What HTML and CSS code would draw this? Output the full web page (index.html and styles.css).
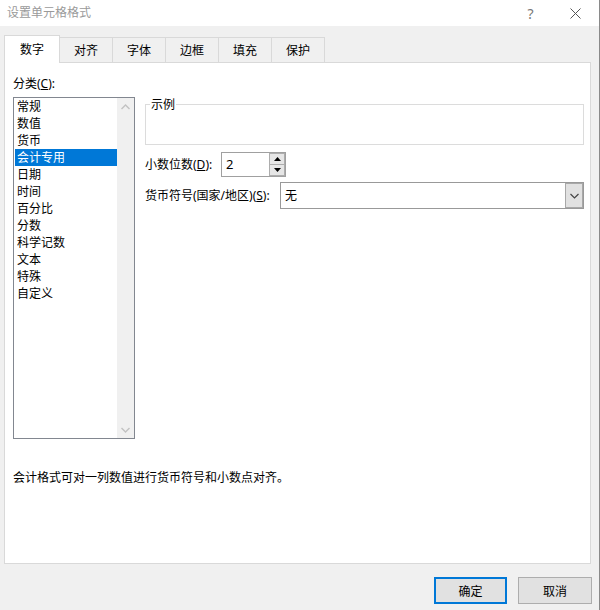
FILE: index.html
```html
<!DOCTYPE html>
<html lang="zh-CN">
<head>
<meta charset="utf-8">
<title>设置单元格格式</title>
<link rel="stylesheet" href="styles.css">
</head>
<body>
<div class="window">
  <div class="titlebar">
    <div class="title">设置单元格格式</div>
    <div class="tb-btn help">?</div>
    <div class="tb-btn close">
      <svg width="11" height="11" viewBox="0 0 11 11"><path d="M0.5 0.5 L10.5 10.5 M10.5 0.5 L0.5 10.5" stroke="#555" stroke-width="1" fill="none"/></svg>
    </div>
  </div>

  <div class="tabs">
    <div class="tab active">数字</div>
    <div class="tab">对齐</div>
    <div class="tab">字体</div>
    <div class="tab">边框</div>
    <div class="tab">填充</div>
    <div class="tab">保护</div>
  </div>

  <div class="panel">
    <div class="cols">
      <div class="left">
        <div class="lbl">分类(<u>C</u>):</div>
        <div class="listbox">
          <div class="items">
            <div class="item">常规</div>
            <div class="item">数值</div>
            <div class="item">货币</div>
            <div class="item sel">会计专用</div>
            <div class="item">日期</div>
            <div class="item">时间</div>
            <div class="item">百分比</div>
            <div class="item">分数</div>
            <div class="item">科学记数</div>
            <div class="item">文本</div>
            <div class="item">特殊</div>
            <div class="item">自定义</div>
          </div>
          <div class="scroll">
            <div class="sarrow"><svg width="9" height="6" viewBox="0 0 9 6"><path d="M0.5 5 L4.5 1 L8.5 5" stroke="#c2c2c2" stroke-width="1.4" fill="none"/></svg></div>
            <div class="sarrow"><svg width="9" height="6" viewBox="0 0 9 6"><path d="M0.5 1 L4.5 5 L8.5 1" stroke="#c2c2c2" stroke-width="1.4" fill="none"/></svg></div>
          </div>
        </div>
      </div>
      <div class="right">
        <fieldset class="sample">
          <legend>示例</legend>
          <div class="sample-body"></div>
        </fieldset>
        <div class="row row1">
          <div class="flabel w1">小数位数(<u>D</u>):</div>
          <div class="spin">
            <div class="spin-val">2</div>
            <div class="spin-btns">
              <div class="sbtn"><svg width="7" height="4" viewBox="0 0 7 4"><path d="M0 4 L3.5 0 L7 4 Z" fill="#000"/></svg></div>
              <div class="sbtn"><svg width="7" height="4" viewBox="0 0 7 4"><path d="M0 0 L3.5 4 L7 0 Z" fill="#000"/></svg></div>
            </div>
          </div>
        </div>
        <div class="row row2">
          <div class="flabel w2">货币符号(国家/地区)(<u>S</u>):</div>
          <div class="select">
            <div class="sel-val">无</div>
            <div class="sel-btn"><svg width="9" height="6" viewBox="0 0 9 6"><path d="M0.5 1 L4.5 5 L8.5 1" stroke="#444" stroke-width="1.2" fill="none"/></svg></div>
          </div>
        </div>
      </div>
    </div>
    <div class="desc">会计格式可对一列数值进行货币符号和小数点对齐。</div>
  </div>

  <div class="footer">
    <div class="btn primary">确定</div>
    <div class="btn">取消</div>
  </div>
</div>
</body>
</html>
```

FILE: styles.css
```css
html, body {
  margin: 0;
  padding: 0;
}
body {
  width: 600px;
  height: 610px;
  overflow: hidden;
  background: #f0f0f0;
  font-family: "Noto Sans", "Noto Sans CJK SC", sans-serif;
  font-size: 12px;
  color: #000;
}
.window {
  width: 599px;
  height: 610px;
  border-right: 1px solid #8a8a8a;
  background: #f0f0f0;
}
.titlebar {
  height: 26px;
  background: #fff;
  display: flex;
  align-items: center;
}
.title {
  flex: 1;
  padding-left: 7px;
  color: #9a9a9a;
  line-height: 26px;
}
.tb-btn {
  width: 45px;
  height: 26px;
  display: flex;
  align-items: center;
  justify-content: center;
  color: #777;
}
.help {
  font-size: 14px;
}
.close {
  margin-right: 1px;
}
.tabs {
  display: flex;
  align-items: flex-end;
  height: 27px;
  margin: 9px 0 0 4px;
}
.tab {
  box-sizing: border-box;
  width: 53px;
  height: 25px;
  border: 1px solid #d9d9d9;
  border-left: none;
  border-bottom: none;
  background: #f0f0f0;
  display: flex;
  align-items: center;
  justify-content: center;
  line-height: 17px;
  padding-top: 1px;
}
.tab.active {
  width: 56px;
  height: 28px;
  margin-bottom: -1px;
  border-left: 1px solid #d9d9d9;
  background: #fff;
  position: relative;
  z-index: 1;
  padding-top: 0;
  padding-bottom: 1px;
}
.panel {
  box-sizing: border-box;
  width: 587px;
  height: 502px;
  margin-left: 4px;
  border: 1px solid #d9d9d9;
  background: #fff;
  padding: 12px 6px 0 8px;
}
.cols {
  display: grid;
  grid-template-columns: 122px 439px;
  column-gap: 10px;
}
.lbl {
  line-height: 17px;
  height: 17px;
}
.listbox {
  box-sizing: border-box;
  margin-top: 5px;
  width: 122px;
  height: 342px;
  border: 1px solid #828790;
  display: flex;
  background: #fff;
}
.items {
  flex: 1;
  padding-top: 0;
}
.item {
  height: 17px;
  line-height: 17px;
  margin-left: 1px;
  padding-left: 2px;
  white-space: nowrap;
}
.item.sel {
  background: #0078d7;
  color: #fff;
}
.scroll {
  width: 17px;
  background: #f0f0f0;
  display: flex;
  flex-direction: column;
  justify-content: space-between;
}
.sarrow {
  height: 17px;
  display: flex;
  align-items: center;
  justify-content: center;
}
.sample {
  margin: 21px 0 0 0;
  padding: 0;
  border: 1px solid #dcdcdc;
  min-width: 0;
}
.sample legend {
  padding: 0 1px;
  margin-left: 4px;
  line-height: 17px;
  height: 17px;
}
.sample-body {
  height: 31px;
}
.row {
  display: flex;
  align-items: center;
}
.row1 {
  margin-top: 7px;
  height: 25px;
}
.row2 {
  margin-top: 5px;
  height: 27px;
}
.flabel {
  line-height: 17px;
  white-space: nowrap;
}
.w1 {
  width: 76px;
}
.w2 {
  width: 135px;
}
.spin {
  box-sizing: border-box;
  width: 65px;
  height: 25px;
  border: 1px solid #a0a0a0;
  display: flex;
}
.spin-val {
  flex: 1;
  padding-left: 4px;
  line-height: 22px;
  font-size: 13px;
}
.spin-btns {
  width: 16px;
  display: flex;
  flex-direction: column;
}
.sbtn {
  box-sizing: border-box;
  flex: 1;
  background: #e6e6e6;
  border: 1px solid #adadad;
  display: flex;
  align-items: center;
  justify-content: center;
}
.sbtn + .sbtn {
  border-top: none;
}
.select {
  box-sizing: border-box;
  width: 304px;
  height: 27px;
  border: 1px solid #999;
  display: flex;
}
.sel-val {
  flex: 1;
  padding-left: 4px;
  line-height: 25px;
}
.sel-btn {
  box-sizing: border-box;
  width: 18px;
  background: #e1e1e1;
  border: 1px solid #a8a8a8;
  display: flex;
  align-items: center;
  justify-content: center;
}
.desc {
  margin-top: 30px;
  line-height: 17px;
}
.footer {
  display: flex;
  justify-content: flex-end;
  gap: 11px;
  padding: 13px 7px 0 0;
}
.btn {
  box-sizing: border-box;
  width: 74px;
  height: 27px;
  background: #e1e1e1;
  border: 1px solid #adadad;
  display: flex;
  align-items: center;
  justify-content: center;
}
.btn.primary {
  width: 73px;
  border: 2px solid #0078d7;
}
```
